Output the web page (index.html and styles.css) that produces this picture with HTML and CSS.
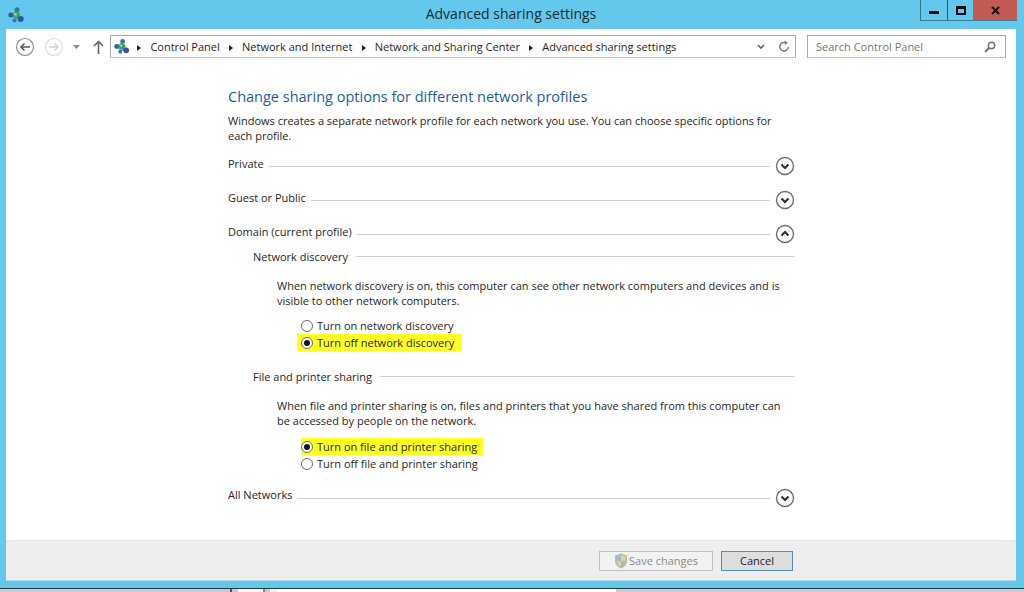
FILE: index.html
```html
<!DOCTYPE html>
<html lang="en">
<head>
<meta charset="utf-8">
<title>Advanced sharing settings</title>
<link rel="stylesheet" href="styles.css">
</head>
<body>
<svg class="defs" width="0" height="0" aria-hidden="true">
  <symbol id="net" viewBox="0 0 16 16">
    <path d="M3 8 8 4 12 11 7 13Z" fill="none" stroke="#7f9fc0" stroke-width="1"/>
    <circle cx="2.800" cy="8" r="2.500" fill="#2a5cab"/>
    <circle cx="9" cy="2.800" r="2.500" fill="#3c6fc0"/>
    <circle cx="8.500" cy="8.200" r="3.400" fill="#3fa548"/>
    <circle cx="7.500" cy="7.200" r="1.200" fill="#a8e0a0"/>
    <circle cx="12.700" cy="12" r="3" fill="#2a55b0"/>
    <circle cx="6.500" cy="13.500" r="2" fill="#3c6fc0"/>
  </symbol>
  <symbol id="down" viewBox="0 0 20 20">
    <circle cx="10" cy="10" r="8.500" fill="#fff" stroke="#6e6e6e" stroke-width="1.400"/>
    <path d="M6.500 8.500 10 12l3.500-3.500" fill="none" stroke="#2c2c2c" stroke-width="2"/>
  </symbol>
  <symbol id="up" viewBox="0 0 20 20">
    <circle cx="10" cy="10" r="8.500" fill="#fff" stroke="#6e6e6e" stroke-width="1.400"/>
    <path d="M6.500 11.500 10 8l3.500 3.500" fill="none" stroke="#2c2c2c" stroke-width="2"/>
  </symbol>
</svg>
<div class="window">
  <header class="titlebar">
    <svg class="title-icon"><use href="#net"/></svg>
    <h1 class="title">Advanced sharing settings</h1>
    <div class="controls">
      <div class="ctl ctl-min"><span class="min-glyph"></span></div>
      <div class="ctl ctl-max"><span class="max-glyph"></span></div>
      <div class="ctl ctl-close">
        <svg width="9" height="9" viewBox="0 0 9 9"><path d="M1 1l7 7M8 1 1 8" stroke="#111" stroke-width="2"/></svg>
      </div>
    </div>
  </header>
  <div class="client">
    <nav class="toolbar">
      <svg class="nav-btn" viewBox="0 0 20 20"><circle cx="10" cy="10" r="8.500" fill="none" stroke="#8c8c8c" stroke-width="1.200"/><path d="M15 10H6M9.500 6.500 6 10l3.500 3.500" fill="none" stroke="#555" stroke-width="1.500"/></svg>
      <svg class="nav-btn nav-fwd" viewBox="0 0 20 20"><circle cx="10" cy="10" r="8.500" fill="none" stroke="#dcdcdc" stroke-width="1.200"/><path d="M5 10h9M10.500 6.500 14 10l-3.500 3.500" fill="none" stroke="#d4d4d4" stroke-width="1.500"/></svg>
      <svg class="nav-drop" width="7" height="4" viewBox="0 0 7 4"><path d="M0 0h7L3.500 4Z" fill="#8a8a8a"/></svg>
      <svg class="nav-up" width="11" height="14" viewBox="0 0 11 14"><path d="M5.500 14V2M1 6l4.500-4.500L10 6" fill="none" stroke="#666" stroke-width="1.600"/></svg>
      <div class="address">
        <svg class="addr-icon"><use href="#net"/></svg>
        <span class="crumb">Control Panel</span>
        <span class="crumb">Network and Internet</span>
        <span class="crumb">Network and Sharing Center</span>
        <span class="crumb">Advanced sharing settings</span>
        <svg class="addr-chev" width="8" height="6" viewBox="0 0 8 6"><path d="M1 1l3 3 3-3" fill="none" stroke="#666" stroke-width="1.600"/></svg>
        <svg class="addr-refresh" width="12" height="13" viewBox="0 0 12 13"><path d="M8.500 3.200A4.300 4.300 0 1 0 10.300 7" fill="none" stroke="#777" stroke-width="1.400"/><path d="M6.500 0.500 9.800 2.800 6.800 5Z" fill="#777"/></svg>
      </div>
      <div class="search">
        <span class="search-text">Search Control Panel</span>
        <svg width="12" height="12" viewBox="0 0 12 12"><circle cx="7.500" cy="4.500" r="3.200" fill="none" stroke="#777" stroke-width="1.500"/><path d="M5 7 1 11" stroke="#777" stroke-width="2"/></svg>
      </div>
    </nav>
    <main class="content">
      <div class="panel">
        <h2 class="heading">Change sharing options for different network profiles</h2>
        <p class="intro">Windows creates a separate network profile for each network you use. You can choose specific options for each profile.</p>
        <div class="profile profile-first"><span>Private</span><i class="rule"></i><svg class="toggle"><use href="#down"/></svg></div>
        <div class="profile"><span>Guest or Public</span><i class="rule"></i><svg class="toggle"><use href="#down"/></svg></div>
        <div class="profile"><span>Domain (current profile)</span><i class="rule"></i><svg class="toggle"><use href="#up"/></svg></div>
        <section class="group">
          <div class="group-head"><span>Network discovery</span><i class="rule"></i></div>
          <p class="desc">When network discovery is on, this computer can see other network computers and devices and is visible to other network computers.</p>
          <div class="options">
            <div class="option"><span class="radio"></span>Turn on network discovery</div>
            <div class="option option-hl hl-a"><span class="radio radio-on"></span>Turn off network discovery</div>
          </div>
        </section>
        <section class="group group-2">
          <div class="group-head"><span>File and printer sharing</span><i class="rule"></i></div>
          <p class="desc">When file and printer sharing is on, files and printers that you have shared from this computer can be accessed by people on the network.</p>
          <div class="options">
            <div class="option option-hl hl-b"><span class="radio radio-on"></span>Turn on file and printer sharing</div>
            <div class="option"><span class="radio"></span>Turn off file and printer sharing</div>
          </div>
        </section>
        <div class="profile profile-last"><span>All Networks</span><i class="rule"></i><svg class="toggle"><use href="#down"/></svg></div>
      </div>
    </main>
    <footer class="footer">
      <button class="btn btn-save" type="button">
        <svg width="14" height="16" viewBox="0 0 14 16"><path d="M7 .5 13 2.500V8c0 3.500-3 6-6 7.500C4 14 1 11.500 1 8V2.500Z" fill="#b8b8b8"/><path d="M7 2 2.500 3.500V8H7Z" fill="#8fbfe6"/><path d="M7 2v6h4.500V3.500Z" fill="#f0d470"/><path d="M7 8H2.500c.3 2.500 2.300 4.300 4.500 5.500Z" fill="#f0d470"/><path d="M7 8v5.500c2.200-1.200 4.200-3 4.500-5.500Z" fill="#8fbfe6"/></svg>
        Save changes
      </button>
      <button class="btn btn-cancel" type="button">Cancel</button>
    </footer>
  </div>
</div>
<div class="taskstrip">
  <i class="strip-a"></i><i class="strip-b"></i><i class="strip-c"></i><i class="strip-d"></i><i class="strip-e"></i>
</div>
</body>
</html>
```
FILE: styles.css
```css
* { box-sizing: border-box; }
html, body { margin: 0; padding: 0; }
body {
  width: 1024px;
  height: 592px;
  overflow: hidden;
  font-family: "Open Sans", "Noto Sans", sans-serif;
  font-size: 11px;
  color: #262626;
  background: #b9d3de;
}
.defs { display: block; height: 0; }
.window {
  height: 588px;
  background: #63c8eb;
  display: flex;
  flex-direction: column;
  padding: 0 8px 7px 6px;
}
.titlebar {
  height: 29px;
  flex: none;
  display: grid;
  grid-template-columns: 1fr auto 1fr;
  align-items: start;
}
.title-icon { width: 16px; height: 16px; margin: 7px 0 0 2px; }
.title {
  margin: 4px 0 0;
  font-size: 14px;
  line-height: 20px;
  font-weight: 400;
  color: #1e2a30;
}
.controls { justify-self: end; display: flex; height: 21px; margin-right: -1px; }
.ctl {
  height: 21px;
  display: flex;
  align-items: center;
  justify-content: center;
  border-bottom: 1px solid #3d7f9c;
}
.ctl-min { width: 28px; border-left: 1px solid #3d6f88; border-right: 1px solid #2e5568; }
.ctl-max { width: 25px; }
.ctl-close { width: 44px; background: #c15a50; }
.min-glyph { width: 10px; height: 3px; background: #0c0c0c; margin-top: 4px; }
.max-glyph { width: 10px; height: 9px; border: 2px solid #0c0c0c; border-top-width: 3px; }
.client {
  flex: 1;
  background: #fff;
  display: flex;
  flex-direction: column;
  min-height: 0;
}
.toolbar {
  height: 35px;
  flex: none;
  display: flex;
  align-items: flex-start;
  padding: 6px 0 0 9px;
}
.nav-btn { width: 20px; height: 20px; margin-top: 2px; }
.nav-fwd { margin-left: 9px; }
.nav-drop { margin: 10px 0 0 9px; }
.nav-up { margin: 5px 0 0 13px; }
.address {
  margin-left: 6px;
  width: 686px;
  height: 23px;
  border: 1px solid #a8a8a8;
  border-bottom-color: #c4c4c4;
  display: flex;
  align-items: center;
  padding-left: 3px;
}
.addr-icon { width: 15.400px; height: 17px; flex: none; }
.crumb { white-space: nowrap; font-size: 11px; color: #1f1f1f; margin-right: 1.300px; }
.crumb::before {
  content: "";
  display: inline-block;
  border-left: 4px solid #222;
  border-top: 3.500px solid transparent;
  border-bottom: 3.500px solid transparent;
  margin: 0 9px 0 8px;
}
.addr-chev { margin-left: auto; }
.addr-refresh { margin: 0 5px 0 13px; }
.search {
  margin-left: 11px;
  width: 199px;
  height: 23px;
  border: 1px solid #a8a8a8;
  border-bottom-color: #c4c4c4;
  display: flex;
  align-items: center;
  justify-content: space-between;
  padding: 0 9px 0 8px;
  color: #767676;
}
.content { flex: 1; min-height: 0; padding-left: 222px; }
.panel { width: 566px; }
.heading {
  margin: 23px 0 0;
  font-size: 14.500px;
  line-height: 20px;
  font-weight: 400;
  color: #1f5c9e;
}
.intro { margin: 7px 0 0; line-height: 14.500px; width: 560px; }
.profile {
  display: flex;
  align-items: flex-end;
  height: 20px;
  margin-top: 14px;
  line-height: 15px;
}
.profile span { padding-bottom: 5px; white-space: nowrap; }
.profile-first { margin-top: 13px; }
.profile-last { margin-top: 16px; }
.profile-last span { padding-bottom: 6px; }
.rule {
  flex: 1;
  height: 1px;
  background: #cfcfcf;
  margin: 0 0 9px 5px;
  display: block;
}
.toggle { width: 20px; height: 20px; flex: none; margin: 0 -1px 0 5px; }
.group { padding-left: 25px; }
.group-head {
  display: flex;
  align-items: center;
  height: 15px;
  margin-top: 5px;
  white-space: nowrap;
}
.group-head .rule { margin: 0 0 0 8px; }
.desc { margin: 14px 0 0 24px; line-height: 15px; width: 515px; }
.options { margin: 9px 0 0 24px; }
.option {
  display: flex;
  align-items: center;
  height: 17px;
  white-space: nowrap;
}
.options .option { margin-left: 24px; }
.option-hl { background: #ffff23; }
.options .hl-a { margin-left: 20px; padding-left: 4px; width: 164px; }
.options .hl-b { width: 182px; }
.radio {
  width: 12px;
  height: 12px;
  border: 1px solid #6b6b6b;
  border-radius: 50%;
  background: #fff;
  margin: 0 4px 0 0;
  flex: none;
  display: flex;
  align-items: center;
  justify-content: center;
}
.radio-on::after {
  content: "";
  width: 6px;
  height: 6px;
  border-radius: 50%;
  background: #111;
}
.group-2 { margin-top: 18px; }
.group-2 .desc { margin-top: 15px; line-height: 14.500px; }
.group-2 .options { margin-top: 10px; }
.footer {
  height: 41px;
  flex: none;
  background: #eeeeee;
  border-top: 1px solid #e6e6e6;
  border-bottom: 1px solid #b9dcea;
  display: flex;
  align-items: flex-start;
  justify-content: flex-end;
  gap: 8px;
  padding: 10px 223px 0 0;
}
.btn {
  height: 20px;
  font-family: inherit;
  font-size: 11px;
  line-height: 18px;
  padding: 0;
  display: flex;
  align-items: center;
  justify-content: center;
}
.btn-save {
  width: 114px;
  background: #f2f2f2;
  border: 1px solid #c0c0c0;
  color: #8a8a8a;
  gap: 1px;
}
.btn-cancel {
  width: 72px;
  background: #dedede;
  border: 1px solid #4f8fc0;
  color: #222;
}
.taskstrip {
  height: 4px;
  border-top: 1px solid #333;
  display: flex;
  background: #b9d3de;
}
.strip-a { width: 2px; background: #555; margin-left: 230px; }
.strip-b { width: 25px; background: #f5f5f5; margin-left: 6px; }
.strip-c { width: 2px; background: #888; }
.strip-d { width: 7px; background: #eef2f3; margin-left: 5px; }
.strip-e { width: 339px; background: #fff; }
```
